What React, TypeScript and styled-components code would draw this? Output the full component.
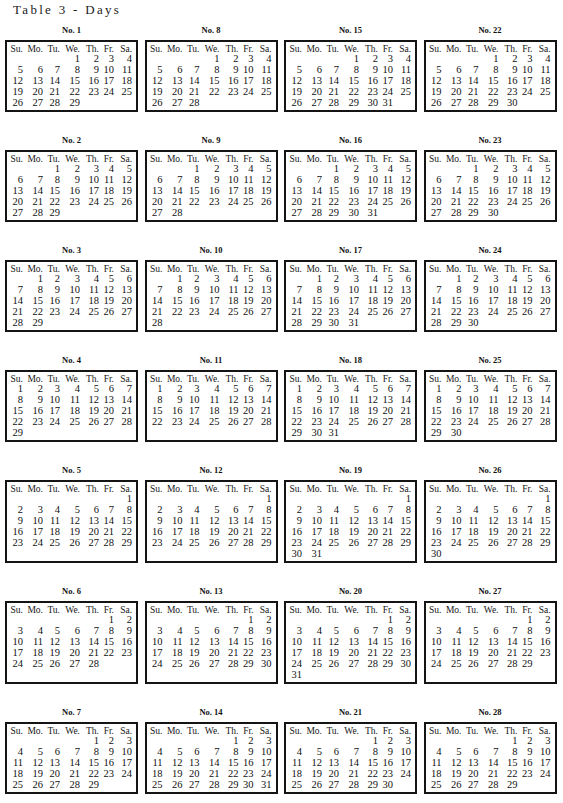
import * as React from 'react';
import styled, { createGlobalStyle } from 'styled-components';

const SERIF = `"Liberation Serif", "Times New Roman", serif`;

const GlobalStyle = createGlobalStyle`
  html, body {
    margin: 0;
    padding: 0;
    background: #fff;
  }
  body {
    font-family: ${SERIF};
    color: #151515;
  }
`;

const Page = styled.div`
  width: 563px;
  height: 803px;
  overflow: hidden;
  background: #fff;
`;

const Title = styled.h1`
  margin: 0;
  padding: 2px 0 0 13px;
  height: 18px;
  box-sizing: border-box;
  font-size: 13px;
  line-height: 16px;
  font-weight: normal;
  letter-spacing: 2.3px;
  color: #1a1a1a;
`;

const Sheet = styled.div`
  display: grid;
  grid-template-columns: repeat(4, 133px);
  grid-template-rows: repeat(7, auto);
  grid-auto-flow: column;
  column-gap: 6.5px;
  row-gap: 23px;
  padding: 7px 0 0 5px;
`;

const Cell = styled.div`
  display: flex;
  flex-direction: column;
`;

const Label = styled.div`
  font-weight: bold;
  font-size: 8.5px;
  line-height: 10px;
  text-align: center;
  margin-bottom: 5px;
  color: #111;
`;

const Box = styled.div`
  flex: 1;
  border: 2px solid #141414;
  padding: 2px 4px 2px 0;
  display: grid;
  grid-template-columns: 16px 20px 17px 20px 19px 15px 18px;
  grid-template-rows: 10px 10px;
  grid-auto-rows: 11px;
  align-content: start;
  justify-items: end;
  align-items: center;
`;

const Head = styled.span`
  font-size: 9.5px;
  line-height: 10px;
  white-space: nowrap;
  color: #161616;
`;

const Day = styled.span<{ $col?: number }>`
  font-size: 10.5px;
  line-height: 10px;
  color: #111;
  ${p => (p.$col ? `grid-column-start: ${p.$col};` : '')}
`;

const HEADS = ['Su.', 'Mo.', 'Tu.', 'We.', 'Th.', 'Fr.', 'Sa.'];

// weekday of the 1st for each position in a column (Su = 0)
const STARTS = [3, 2, 1, 0, 6, 5, 4];
const LENGTHS = [
  [29, 29, 29, 29, 29, 28, 29],
  [28, 28, 28, 28, 29, 30, 31],
  [31, 31, 31, 31, 31, 31, 30],
  [30, 30, 30, 30, 30, 29, 29],
];

const CALENDARS = LENGTHS.flatMap((col, c) =>
  col.map((days, r) => ({ no: c * 7 + r + 1, start: STARTS[r], days }))
);

const Calendar = ({ no, start, days }: { no: number; start: number; days: number }) => (
  <Cell>
    <Label>No. {no}</Label>
    <Box>
      {HEADS.map(h => (
        <Head key={h}>{h}</Head>
      ))}
      {Array.from({ length: days }, (_, i) => (
        <Day key={i} $col={i === 0 ? start + 1 : undefined}>
          {i + 1}
        </Day>
      ))}
    </Box>
  </Cell>
);

const App = () => (
  <Page>
    <GlobalStyle />
    <Title>Table 3 - Days</Title>
    <Sheet>
      {CALENDARS.map(cal => (
        <Calendar key={cal.no} {...cal} />
      ))}
    </Sheet>
  </Page>
);

export default App;
